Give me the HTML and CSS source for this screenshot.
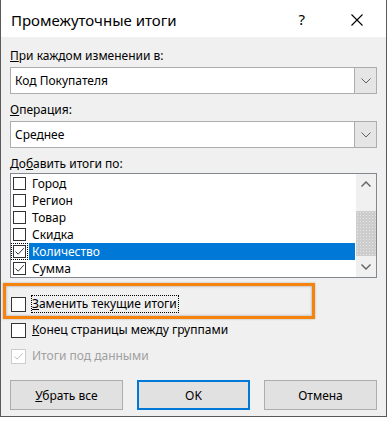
FILE: index.html
```html
<!DOCTYPE html>
<html lang="ru">
<head>
  <meta charset="UTF-8" />
  <title>Промежуточные итоги</title>
  <link rel="stylesheet" href="styles.css">
</head>
<body>

  <div class="dialog">
    <div class="titlebar">
      <span class="title">Промежуточные итоги</span>
      <span class="help">?</span>
      <svg class="close" width="12" height="12" viewBox="0 0 12 12">
        <path d="M0.5 0.5 L11.5 11.5 M11.5 0.5 L0.5 11.5" stroke="#000" stroke-width="1.1" fill="none"/>
      </svg>
    </div>

    <div class="content">
      <div class="label first"><u>П</u>ри каждом изменении в:</div>
      <div class="combo">
        <span class="combo-text">Код Покупателя</span>
        <span class="combo-btn">
          <svg width="10" height="6" viewBox="0 0 10 6"><path d="M0.5 0.5 L5 5 L9.5 0.5" stroke="#606060" fill="none"/></svg>
        </span>
      </div>

      <div class="label"><u>О</u>перация:</div>
      <div class="combo">
        <span class="combo-text">Среднее</span>
        <span class="combo-btn">
          <svg width="10" height="6" viewBox="0 0 10 6"><path d="M0.5 0.5 L5 5 L9.5 0.5" stroke="#606060" fill="none"/></svg>
        </span>
      </div>

      <div class="label">До<u>б</u>авить итоги по:</div>
      <div class="listbox">
        <div class="items">
          <div class="item"><span class="box"></span><span class="text">Город</span></div>
          <div class="item"><span class="box"></span><span class="text">Регион</span></div>
          <div class="item"><span class="box"></span><span class="text">Товар</span></div>
          <div class="item"><span class="box"></span><span class="text">Скидка</span></div>
          <div class="item selected">
            <span class="box checked focus"><svg width="11" height="11" viewBox="0 0 11 11"><path d="M1.5 5.5 L4.2 8.2 L9.8 2.2" stroke="#333" fill="none"/></svg></span>
            <span class="text">Количество</span>
          </div>
          <div class="item">
            <span class="box checked"><svg width="11" height="11" viewBox="0 0 11 11"><path d="M1.5 5.5 L4.2 8.2 L9.8 2.2" stroke="#333" fill="none"/></svg></span>
            <span class="text">Сумма</span>
          </div>
        </div>
        <div class="scrollbar">
          <span class="arrow">
            <svg width="10" height="6" viewBox="0 0 10 6"><path d="M0.5 5.5 L5 1 L9.5 5.5" stroke="#606060" stroke-width="1.4" fill="none"/></svg>
          </span>
          <span class="track"><span class="thumb"></span></span>
          <span class="arrow">
            <svg width="10" height="6" viewBox="0 0 10 6"><path d="M0.5 0.5 L5 5 L9.5 0.5" stroke="#606060" stroke-width="1.4" fill="none"/></svg>
          </span>
        </div>
      </div>

      <div class="options">
        <div class="option">
          <span class="box"></span>
          <span class="text focus-text"><u>З</u>аменить текущие итоги</span>
        </div>
        <div class="option">
          <span class="box"></span>
          <span class="text"><u>К</u>онец страницы между группами</span>
        </div>
        <div class="option disabled">
          <span class="box"><svg width="11" height="11" viewBox="0 0 11 11"><path d="M1.5 5.5 L4.2 8.2 L9.8 2.2" stroke="#c4c4c4" fill="none"/></svg></span>
          <span class="text">Итоги под данными</span>
        </div>
        <div class="highlight"></div>
      </div>

      <div class="buttons">
        <button class="btn"><u>У</u>брать все</button>
        <button class="btn default">OK</button>
        <button class="btn">Отмена</button>
      </div>
    </div>
  </div>

</body>
</html>
```

FILE: styles.css
```css
body {
  margin: 0;
  background-color: #fff;
  font-family: "Noto Sans", "Open Sans", sans-serif;
  font-size: 12px;
  color: #000;
}

.dialog {
  width: 387px;
  box-sizing: border-box;
  border: 1px solid #5a5a5a;
  border-top: none;
  background-color: #f0f0f0;
}

/* заголовок окна */
.titlebar {
  height: 37px;
  background-color: #fff;
  display: flex;
  align-items: center;
  position: relative;
}
.titlebar .title {
  font-size: 15px;
  margin-left: 10px;
  margin-top: 2px;
  flex: 1;
}
.titlebar .help {
  font-size: 15px;
  margin-right: 46px;
  margin-top: 1px;
}
.titlebar .close {
  margin-right: 23px;
  margin-top: 3px;
}

.content {
  padding: 11px 9px 6px 9px;
}

.label {
  height: 16px;
  line-height: 16px;
  margin-top: 8px;
  margin-bottom: 3px;
}
.label.first {
  margin-top: 0;
}
.label + .listbox {
  margin-top: -2px;
}

.combo {
  height: 27px;
  box-sizing: border-box;
  border: 1px solid #adadad;
  background-color: #fff;
  display: flex;
}
.combo-text {
  flex: 1;
  padding-left: 4px;
  line-height: 25px;
}
.combo-btn {
  width: 21px;
  background-color: #e5e5e5;
  border-left: 1px solid #adadad;
  display: flex;
  align-items: center;
  justify-content: center;
}

.listbox {
  height: 105px;
  box-sizing: border-box;
  border: 1px solid #828790;
  background-color: #fff;
  display: flex;
}
.items {
  flex: 1;
  padding-top: 1px;
  padding-left: 2px;
  padding-right: 1px;
}
.item {
  height: 17px;
  display: flex;
  align-items: center;
}
.item .text {
  flex: 1;
  height: 17px;
  line-height: 17px;
  padding-left: 3px;
  margin-left: 3px;
}
.item.selected .text {
  background-color: #0078d7;
  color: #fff;
}

.box {
  width: 13px;
  height: 13px;
  box-sizing: border-box;
  border: 1px solid #333;
  background-color: #fff;
  display: flex;
  align-items: center;
  justify-content: center;
}
.box.focus {
  outline: 1px dotted #000;
  outline-offset: 1px;
}

.scrollbar {
  width: 20px;
  background-color: #f0f0f0;
  display: flex;
  flex-direction: column;
}
.scrollbar .arrow {
  height: 20px;
  display: flex;
  align-items: center;
  justify-content: center;
}
.scrollbar .track {
  flex: 1;
  display: flex;
  flex-direction: column;
  justify-content: flex-end;
  padding-bottom: 1px;
}
.scrollbar .thumb {
  height: 45px;
  background-color: #cdcdcd;
  background-image: radial-gradient(#e6e6e6 0.7px, transparent 0.9px);
  background-size: 3px 3px;
}

.options {
  position: relative;
  margin-top: 18px;
  display: flex;
  flex-direction: column;
  gap: 10px;
}
.option {
  height: 16px;
  display: flex;
  align-items: center;
  padding-left: 1px;
}
.option .box {
  width: 15px;
  height: 15px;
}
.option .text {
  margin-left: 6px;
  line-height: 16px;
}
.focus-text {
  outline: 1px dotted #000;
  padding-right: 1px;
}
.option.disabled .box {
  border-color: #cccccc;
}
.option.disabled .text {
  color: #a0a0a0;
}

/* рамка-выделение поверх содержимого */
.highlight {
  position: absolute;
  left: -7px;
  top: -13px;
  width: 312px;
  height: 36px;
  box-sizing: border-box;
  border: 3px solid #f7830f;
  box-shadow: inset 0 0 2px 1px #c8c8c8, 0 0 2px #b0b0b0;
}

.buttons {
  margin-top: 16px;
  display: flex;
  justify-content: space-between;
}
.btn {
  width: 113px;
  height: 30px;
  font-family: inherit;
  font-size: 12px;
  color: #000;
  background-color: #e1e1e1;
  border: 1px solid #adadad;
  padding: 0;
}
.btn.default {
  border: 2px solid #0078d7;
}
```
